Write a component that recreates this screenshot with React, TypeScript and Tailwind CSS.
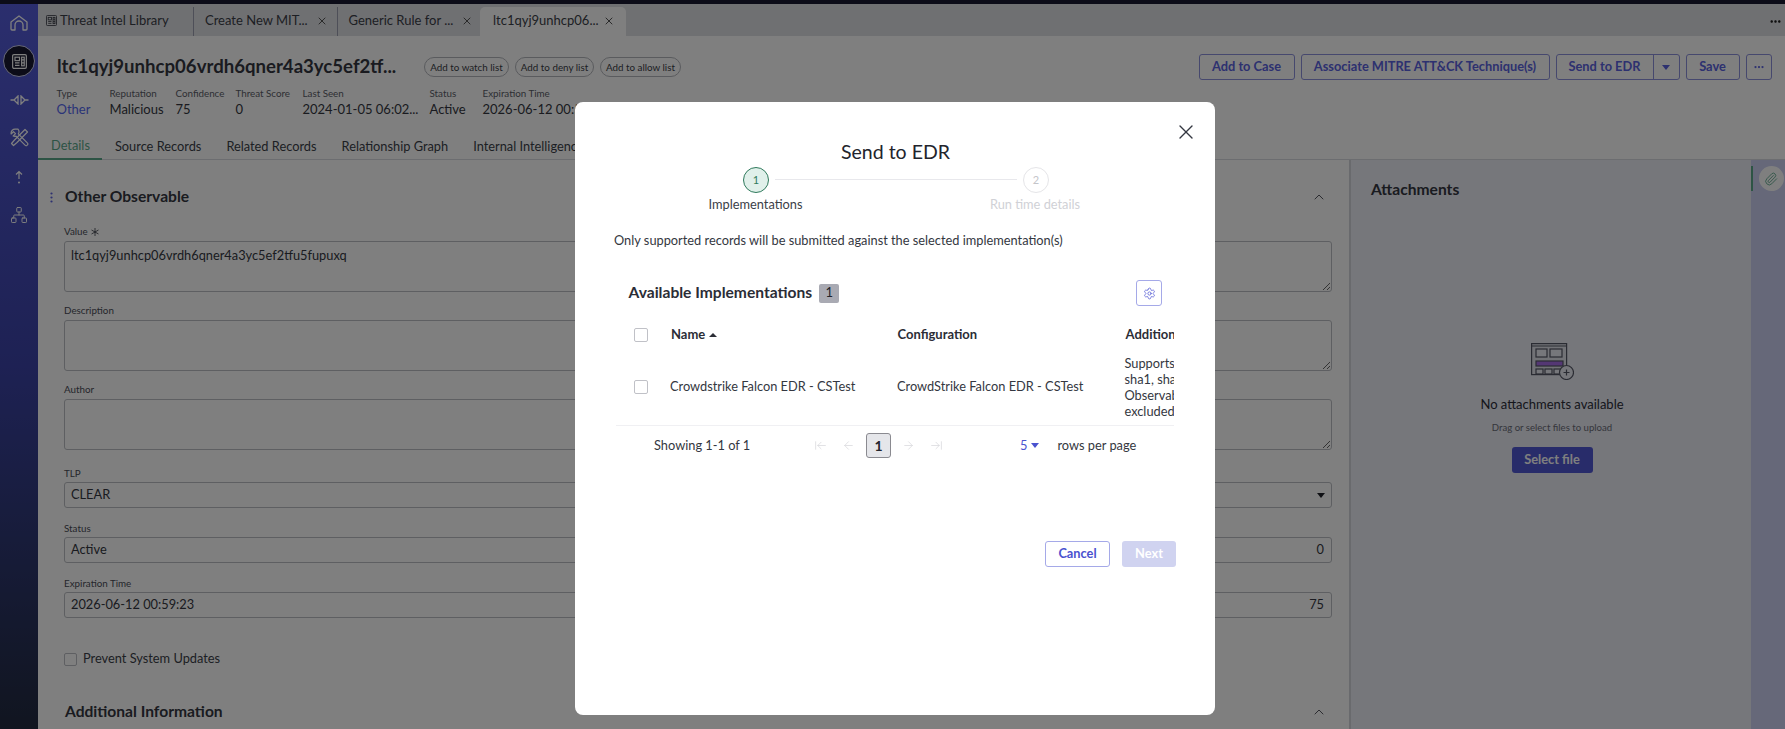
import React from 'react';
import { ArrowLeft, ArrowLeftToLine, ArrowRight, ArrowRightToLine, ChevronUp, Ellipsis, Network, Paperclip, Settings, X } from 'lucide-react';

function LibIcon({ size, color }: { size: number; color: string }) {
  return (
    <svg width={size} height={size} viewBox="0 0 14 14" fill="none" stroke={color} strokeWidth="1.1">
      <rect x="0.600" y="0.600" width="12.800" height="12.800" rx="1.200" />
      <rect x="2.800" y="3" width="4.200" height="3.200" />
      <path d="M2.800 8.300h4.200M2.800 10.600h4.200" />
      <rect x="9" y="3" width="2.400" height="8" />
      <path d="M9 5.500h2.400M9 8.200h2.400" />
    </svg>
  );
}

function Field({ label, tall, star, value, right, caret }: { label: string; tall?: boolean; star?: boolean; value?: string; right?: string; caret?: boolean }) {
  return (
    <div className="flex flex-col">
      <div className="flex h-[14px] items-center text-[9.800px] leading-none text-[#4a4d57]">
        {label}
        {star && (
          <svg className="ml-[3px]" width="8" height="8" viewBox="0 0 8 8" stroke="#343741" strokeWidth="0.800">
            <path d="M4 0v8M0.500 2 7.500 6M7.500 2 0.500 6" />
          </svg>
        )}
      </div>
      {tall ? (
        <textarea readOnly value={value || ''} className="mt-[2px] h-[51px] w-full resize-y rounded-[3px] border border-[#bcbec4] bg-white px-[6px] py-[4px] text-[12.800px] leading-[18px] text-[#343741] outline-none" />
      ) : (
        <div className="mt-px flex h-[26px] items-center justify-between rounded-[3px] border border-[#bcbec4] bg-white pl-[6px] pr-[7px] text-[12.800px] text-[#343741]">
          <span>{value}</span>
          {right && <span>{right}</span>}
          {caret && <span className="mr-[-1px] h-0 w-0 border-x-[4px] border-t-[5px] border-x-transparent border-t-[#1f2128]" />}
        </div>
      )}
    </div>
  );
}

function Meta({ label, value, w, link }: { label: string; value: string; w: string; link?: boolean }) {
  return (
    <div className={w + ' shrink-0 whitespace-nowrap'}>
      <div className="h-[14px] text-[9.800px] leading-[14px] text-[#5b5e68]">{label}</div>
      <div className={(link ? 'text-[#5468f0] ' : 'text-[#343741] ') + 'h-[18px] text-[13px] leading-[18px]'}>{value}</div>
    </div>
  );
}

export default function App() {
  return (
    <div className="relative h-screen w-screen overflow-hidden bg-white [font-family:Lato,sans-serif]">
      <div className="h-[4px] bg-[#181830]" />
      <div className="flex h-[725px]">
        {/* side nav */}
        <div className="flex w-[38px] shrink-0 flex-col items-center bg-gradient-to-b from-[#565ddc] via-[#3c43a8] to-[#222a40] text-white">
          <svg className="mt-[11px]" width="18" height="16" viewBox="0 0 18 16" fill="none" stroke="white" strokeWidth="1.300" strokeLinejoin="round">
            <path d="M1 7 9 1l8 6v7a1 1 0 0 1-1 1h-3V10a4 4 0 0 0-8 0v5H2a1 1 0 0 1-1-1z" />
          </svg>
          <div className="mt-[14px] flex h-[32px] w-[32px] shrink-0 items-center justify-center rounded-full border border-[#cfd2f5] bg-[#181830]">
            <LibIcon size={15} color="white" />
          </div>
          <svg className="mt-[18px]" width="19" height="10" viewBox="0 0 19 10" fill="none" stroke="white" strokeWidth="1.300">
            <path d="M8 1 4 5l4 4zM11 1l4 4-4 4zM0.500 5H4M15 5h3.500" />
          </svg>
          <svg className="mt-[23px]" width="19" height="19" viewBox="0 0 19 19" fill="none" stroke="white" strokeWidth="1.200" strokeLinejoin="round">
            <path d="M15 1.500 17.500 4 7 14.500 3.500 17.500 1.500 15.500 4.500 12z" />
            <path d="M6 1.200a4 4 0 0 0-4.800 4.800L3.500 3.700l2 2-2.300 2.300a4 4 0 0 0 2.800.2l9 9a1.600 1.600 0 0 0 2.300-2.300l-9-9a4 4 0 0 0-.3-4.700z" />
          </svg>
          <svg className="mt-[23px]" width="10" height="14" viewBox="0 0 10 14" fill="none" stroke="white" strokeWidth="1.200">
            <path d="M5 9V1.500M2 4.500l3-3 3 3" />
            <circle cx="5" cy="12.500" r="1" fill="white" stroke="none" />
          </svg>
          <Network size={18} strokeWidth={1.3} className="mt-[22px]" />
        </div>

        <div className="flex min-w-0 flex-1 flex-col">
          {/* open tabs */}
          <div className="flex h-[32px] shrink-0 items-end bg-[#dfe0e4] text-[13px] text-[#3b3e48]">
            <div className="flex h-[29px] items-center pb-[2px] pl-[8px]">
              <LibIcon size={11} color="#3b3e48" />
              <span className="ml-[3px] w-[133px]">Threat Intel Library</span>
            </div>
            <div className="flex h-[29px] items-center border-l border-[#9c9fb0] pb-[2px] pl-[11px]">
              <span className="w-[112px] whitespace-nowrap">Create New MIT...</span>
              <X size={12} className="-mx-px text-[#555]" />
              <span className="w-[9.500px]" />
            </div>
            <div className="flex h-[29px] items-center border-l border-[#9c9fb0] pb-[2px] pl-[11px]">
              <span className="w-[113px] whitespace-nowrap">Generic Rule for ...</span>
              <X size={12} className="-mx-px text-[#555]" />
              <span className="w-[4.500px]" />
            </div>
            <div className="ml-[4px] flex h-[29px] w-[146px] items-center rounded-t-[5px] bg-white pb-[2px] pl-[13px]">
              <span className="w-[111px] whitespace-nowrap">ltc1qyj9unhcp06...</span>
              <X size={12} className="-mx-px text-[#555]" />
            </div>
            <Ellipsis size={13} strokeWidth={2.5} className="mb-[8px] ml-auto mr-[3px] text-[#111]" />
          </div>

          {/* record header */}
          <div className="mt-[18px] flex h-[26px] shrink-0 items-center pl-[19px] pr-[13.500px]">
            <div className="w-[367px] whitespace-nowrap text-[18.600px] font-bold text-[#343741]">ltc1qyj9unhcp06vrdh6qner4a3yc5ef2tf...</div>
            <div className="flex gap-[6px] text-[9.800px] text-[#3b3e48]">
              <div className="flex h-[20px] w-[85px] items-center justify-center rounded-full border border-[#b4b6bc]">Add to watch list</div>
              <div className="flex h-[20px] w-[79px] items-center justify-center rounded-full border border-[#b4b6bc]">Add to deny list</div>
              <div className="flex h-[20px] w-[81px] items-center justify-center rounded-full border border-[#b4b6bc]">Add to allow list</div>
            </div>
            <div className="ml-auto flex h-[26px] gap-[6px] text-[12.800px] font-bold text-[#5a62e0]">
              <div className="flex w-[96px] items-center justify-center rounded-[3px] border border-[#8d91dc]">Add to Case</div>
              <div className="flex w-[249px] items-center justify-center rounded-[3px] border border-[#8d91dc]">Associate MITRE ATT&amp;CK Technique(s)</div>
              <div className="flex w-[124px] rounded-[3px] border border-[#8d91dc]">
                <div className="flex w-[97px] items-center justify-center border-r border-[#8d91dc]">Send to EDR</div>
                <div className="flex flex-1 items-center justify-center"><span className="h-0 w-0 border-x-[4.500px] border-t-[5px] border-x-transparent border-t-[#5a62e0]" /></div>
              </div>
              <div className="flex w-[54px] items-center justify-center rounded-[3px] border border-[#8d91dc]">Save</div>
              <div className="flex w-[26px] items-center justify-center rounded-[3px] border border-[#8d91dc]"><Ellipsis size={12} strokeWidth={2.5} /></div>
            </div>
          </div>
          <div className="mt-[6px] flex shrink-0 pl-[18.500px]">
            <Meta w="w-[53px]" label="Type" value="Other" link />
            <Meta w="w-[66px]" label="Reputation" value="Malicious" />
            <Meta w="w-[60px]" label="Confidence" value="75" />
            <Meta w="w-[67px]" label="Threat Score" value="0" />
            <Meta w="w-[127px]" label="Last Seen" value="2024-01-05 06:02..." />
            <Meta w="w-[53px]" label="Status" value="Active" />
            <Meta w="w-[140px]" label="Expiration Time" value="2026-06-12 00:59:23" />
          </div>
          <div className="mt-[16px] flex h-[26px] shrink-0 border-b border-[#d9dbe0] text-[12.800px] text-[#3b3e48]">
            <div className="-mb-px flex items-center border-b-[2px] border-[#5aa88a] pl-[13px] pr-[12.500px] text-[#5aa88a]">Details</div>
            <div className="flex items-center px-[12.500px]">Source Records</div>
            <div className="flex items-center px-[12.500px]">Related Records</div>
            <div className="flex items-center px-[12.500px]">Relationship Graph</div>
            <div className="flex items-center whitespace-nowrap px-[12.500px]">Internal Intelligence</div>
          </div>

          <div className="flex min-h-0 flex-1">
            {/* form */}
            <div className="w-[1313px] shrink-0 border-r-2 border-[#d2d4da]">
              <div className="mt-[25px] flex h-[24px] items-center pl-[12px] pr-[22px]">
                <svg className="mr-[12px]" width="3" height="11" viewBox="0 0 3 11" fill="#5a62e0">
                  <circle cx="1.500" cy="1.500" r="1.100" />
                  <circle cx="1.500" cy="5.500" r="1.100" />
                  <circle cx="1.500" cy="9.500" r="1.100" />
                </svg>
                <span className="flex-1 text-[15.600px] font-bold text-[#343741]">Other Observable</span>
                <ChevronUp size={16} strokeWidth={1.3} className="text-[#3b3e48]" />
              </div>
              <div className="mt-[16px] pl-[26px] pr-[17px]">
                <div className="flex flex-col gap-[12px]">
                  <Field tall star label="Value" value="ltc1qyj9unhcp06vrdh6qner4a3yc5ef2tfu5fupuxq" />
                  <Field tall label="Description" />
                  <Field tall label="Author" />
                </div>
                <div className="mt-[17px] flex flex-col gap-[14px]">
                  <Field label="TLP" value="CLEAR" caret />
                  <Field label="Status" value="Active" right="0" />
                  <Field label="Expiration Time" value="2026-06-12 00:59:23" right="75" />
                </div>
                <div className="mt-[32px] flex h-[18px] items-center gap-[6px] text-[12.800px] text-[#3b3e48]">
                  <span className="h-[13px] w-[13px] rounded-[2px] border border-[#bcbec4]" />
                  Prevent System Updates
                </div>
              </div>
              <div className="mt-[32px] flex h-[24px] items-center pl-[27px] pr-[22px]">
                <span className="flex-1 text-[15.600px] font-bold text-[#343741]">Additional Information</span>
                <ChevronUp size={16} strokeWidth={1.3} className="text-[#3b3e48]" />
              </div>
            </div>

            {/* attachments */}
            <div className="flex w-[400px] shrink-0 flex-col bg-[#eceef6] pt-[17px]">
              <div className="h-[24px] pl-[20px] text-[15.600px] font-bold leading-[24px] text-[#343741]">Attachments</div>
              <div className="flex flex-col items-center pl-[2px]">
                <svg className="mt-[142px]" width="43" height="37" viewBox="0 0 43 37" fill="none" stroke="#555866" strokeWidth="1.200">
                  <rect x="0.600" y="0.600" width="35" height="31" fill="#e2e4ec" />
                  <path d="M0.600 3h35" />
                  <rect x="5" y="6" width="11" height="8" fill="#eceef6" />
                  <rect x="19" y="6" width="12" height="8" fill="#eceef6" />
                  <rect x="5" y="18" width="27" height="5" fill="#a86ee8" />
                  <rect x="5" y="26" width="7" height="5" fill="#eceef6" />
                  <rect x="14" y="26" width="7" height="5" fill="#eceef6" />
                  <rect x="23" y="26" width="7" height="5" fill="#eceef6" />
                  <circle cx="35.500" cy="29.500" r="7" fill="#eceef6" />
                  <path d="M35.500 26.500v6M32.500 29.500h6" />
                </svg>
                <div className="mt-[15px] h-[18px] text-[13px] leading-[18px] text-[#2b2d36]">No attachments available</div>
                <div className="mt-[8px] h-[14px] text-[9.600px] leading-[14px] text-[#6a6d78]">Drag or select files to upload</div>
                <div className="mt-[12px] flex h-[26px] w-[81px] items-center justify-center rounded-[3px] bg-[#5058d4] text-[12.800px] font-bold text-white">Select file</div>
              </div>
            </div>

            {/* rail */}
            <div className="flex flex-1 items-start bg-[#ccd0f2] pt-[6px]">
              <div className="h-[25px] w-[1.500px] bg-[#5aa88a]" />
              <div className="ml-[6px] flex h-[25px] w-[25px] items-center justify-center rounded-full bg-white">
                <Paperclip size={14} strokeWidth={1.5} className="text-[#5aa88a]" />
              </div>
            </div>
          </div>
        </div>
      </div>

      {/* dimmed backdrop and dialog */}
      <div className="absolute inset-0 bg-black/50">
        <div className="ml-[575px] mt-[102px] h-[613px] w-[640px] rounded-[8px] bg-white">
          <div className="flex h-[38px] items-start justify-end pr-[17px] pt-[18px]">
            <X size={24} strokeWidth={1.4} className="text-[#343741]" />
          </div>
          <div className="h-[24px] pl-[1px] text-center text-[19.500px] leading-[24px] text-[#22242c]">Send to EDR</div>
          {/* stepper */}
          <div className="mt-[3px] flex pl-[168px]">
            <div className="flex h-[26px] w-[26px] items-center justify-center rounded-full border-[1.500px] border-[#2f7a5c] bg-[#e0f0ea] text-[11px] text-[#2f7a5c]">1</div>
            <div className="ml-[6px] mt-[12px] h-[1px] w-[242px] bg-[#e8e8ec]" />
            <div className="ml-[6px] flex h-[26px] w-[26px] items-center justify-center rounded-full border border-[#e5e5e8] text-[11px] text-[#c4c5ca]">2</div>
          </div>
          <div className="mt-[3px] flex h-[16px] text-[12.800px] leading-[16px]">
            <div className="ml-[120px] w-[121px] text-center text-[#3b3e48]">Implementations</div>
            <div className="ml-[159px] w-[120px] text-center text-[#d0d1d6]">Run time details</div>
          </div>
          {/* body */}
          <div className="mt-[19px] h-[18px] pl-[39px] text-[12.800px] leading-[18px] text-[#343741]">Only supported records will be submitted against the selected implementation(s)</div>
          <div className="mt-[31px] flex h-[26px] items-center pl-[53.500px] pr-[53px]">
            <span className="text-[15.600px] font-bold text-[#2b2d36]">Available Implementations</span>
            <span className="ml-[7px] flex h-[19px] w-[20px] items-center justify-center rounded-[2px] bg-[#a9aab3] text-[13px] text-[#22242c]">1</span>
            <div className="ml-auto flex h-[26px] w-[26px] items-center justify-center rounded-[3px] border border-[#a5a9e8]">
              <Settings size={13} strokeWidth={1.5} className="text-[#5c63d6]" />
            </div>
          </div>
          {/* table, last column is cut off on the right */}
          <div className="ml-[41px] w-[558px] overflow-hidden">
            <div className="mt-[15px] flex h-[28px] items-center whitespace-nowrap pl-[18px] text-[13px] font-bold text-[#2b2d36]">
              <span className="h-[14px] w-[14px] shrink-0 rounded-[2px] border border-[#c0c1c7]" />
              <span className="ml-[23px] w-[226.500px] shrink-0">Name <span className="relative top-[-2px] ml-[1px] inline-block h-0 w-0 border-x-[4px] border-b-[4px] border-x-transparent border-b-[#2b2d36]" /></span>
              <span className="w-[228px] shrink-0">Configuration</span>
              <span>Additional Info</span>
            </div>
            <div className="flex h-[77px] items-center whitespace-nowrap border-b border-[#f0f0f3] pl-[18px] text-[12.800px] text-[#343741]">
              <span className="h-[14px] w-[14px] shrink-0 rounded-[2px] border border-[#c0c1c7]" />
              <span className="ml-[22px] w-[227px] shrink-0">Crowdstrike Falcon EDR - CSTest</span>
              <span className="w-[227.500px] shrink-0">CrowdStrike Falcon EDR - CSTest</span>
              <span className="leading-[16px]">Supports md5,<br />sha1, sha256<br />Observables<br />excluded from</span>
            </div>
          </div>
          {/* pager */}
          <div className="mt-[7px] flex h-[25px] items-center pl-[79px] text-[12.800px] text-[#343741]">
            <span className="w-[160px] shrink-0">Showing 1-1 of 1</span>
            <ArrowLeftToLine size={13} strokeWidth={1.3} className="text-[#d5d6da]" />
            <ArrowLeft size={13} strokeWidth={1.3} className="ml-[15px] text-[#d5d6da]" />
            <span className="ml-[11px] flex h-[25px] w-[25px] items-center justify-center rounded-[3px] border border-[#8a8a90] bg-[#e5e6ea] text-[14px] font-bold text-[#22242c]">1</span>
            <ArrowRight size={13} strokeWidth={1.3} className="ml-[11px] text-[#d5d6da]" />
            <ArrowRightToLine size={13} strokeWidth={1.3} className="ml-[15px] text-[#d5d6da]" />
            <span className="ml-[77px] text-[#4a52cf]">5</span>
            <span className="ml-[4px] h-0 w-0 border-x-[4px] border-t-[5px] border-x-transparent border-t-[#4a52cf]" />
            <span className="ml-[18px]">rows per page</span>
          </div>
          {/* footer */}
          <div className="mt-[83px] flex justify-end gap-[12px] pr-[39px] text-[12.800px] font-bold">
            <div className="flex h-[26px] w-[65px] items-center justify-center rounded-[3px] border border-[#a5a9e8] text-[#4a52cf]">Cancel</div>
            <div className="flex h-[26px] w-[54px] items-center justify-center rounded-[3px] bg-[#d0d3f0] text-white">Next</div>
          </div>
        </div>
      </div>
    </div>
  );
}
